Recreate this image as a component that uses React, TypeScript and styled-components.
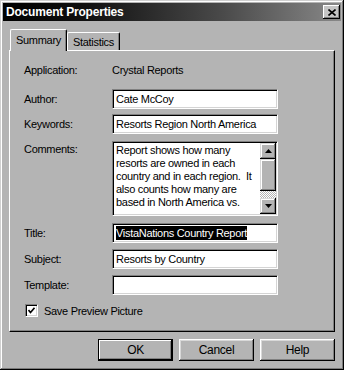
import React from "react";
import styled, { createGlobalStyle } from "styled-components";

const Global = createGlobalStyle`
  html, body { margin: 0; padding: 0; background: #b4b4b4; }
  * { box-sizing: border-box; }
`;

const Window = styled.div`
  width: 344px;
  height: 370px;
  background: #b4b4b4;
  padding: 3px;
  display: flex;
  flex-direction: column;
  font-family: "Liberation Sans", Arial, sans-serif;
  font-size: 11px;
  letter-spacing: -0.3px;
  color: #000;
  box-shadow: inset -1px -1px #000, inset 1px 1px #d0d0d0, inset -2px -2px #7a7a7a,
    inset 2px 2px #fff;
`;

const TitleBar = styled.div`
  height: 18px;
  display: flex;
  align-items: center;
  justify-content: space-between;
  padding: 0 1px 0 3px;
  background: linear-gradient(to right, #000 0%, #111 25%, #4a4a4a 65%, #888 100%);
`;

const TitleText = styled.span`
  color: #fff;
  font-weight: bold;
  font-size: 12px;
  letter-spacing: -0.2px;
`;

const CloseButton = styled.div`
  width: 17px;
  height: 14px;
  background: #c4c4c4;
  display: flex;
  align-items: center;
  justify-content: center;
  box-shadow: inset -1px -1px #000, inset 1px 1px #fff, inset -2px -2px #808080;
`;

const Body = styled.div`
  flex: 1;
  display: flex;
  flex-direction: column;
  padding: 8px 7px 0 6px;
`;

const TabRow = styled.div`
  display: flex;
  align-items: flex-end;
  height: 21px;
  padding-left: 1px;
  position: relative;
  z-index: 1;
`;

const Tab = styled.div<{ $active?: boolean }>`
  height: ${(p) => (p.$active ? 22 : 18)}px;
  width: ${(p) => (p.$active ? 57 : 53)}px;
  margin-bottom: ${(p) => (p.$active ? -1 : 0)}px;
  background: #b4b4b4;
  display: flex;
  align-items: center;
  justify-content: center;
  padding-bottom: ${(p) => (p.$active ? 2 : 0)}px;
  border-top: 1px solid #fff;
  border-left: 1px solid #fff;
  border-right: 1px solid #000;
  border-top-left-radius: 2px;
  border-top-right-radius: 2px;
  box-shadow: inset -1px 0 #808080;
`;

const Panel = styled.div`
  width: 326px;
  height: 282px;
  border-top: 1px solid #fff;
  border-left: 1px solid #fff;
  border-right: 1px solid #000;
  border-bottom: 1px solid #000;
  box-shadow: inset -1px -1px #808080;
  padding: 9px 0 0 14px;
  display: flex;
  flex-direction: column;
`;

const Row = styled.div<{ $gap: number }>`
  display: flex;
  align-items: center;
  margin-top: ${(p) => p.$gap}px;
`;

const TopRow = styled(Row)`
  align-items: flex-start;
`;

const Label = styled.div`
  width: 88px;
  line-height: 13px;
`;

const TopLabel = styled(Label)`
  padding-top: 2px;
`;

const Value = styled.div`
  line-height: 20px;
  height: 20px;
`;

const Field = styled.div<{ $h?: number }>`
  width: 166px;
  height: ${(p) => p.$h ?? 20}px;
  background: #fff;
  border-top: 1px solid #808080;
  border-left: 1px solid #808080;
  border-right: 1px solid #fff;
  border-bottom: 1px solid #fff;
  box-shadow: inset 1px 1px #000, inset -1px -1px #d4d4d4;
  padding: 0 3px;
  line-height: 18px;
  white-space: nowrap;
  overflow: hidden;
`;

const Selected = styled.span`
  background: #000;
  color: #fff;
  display: inline-block;
  line-height: 14px;
`;

const TextArea = styled(Field)`
  display: flex;
  padding: 0 0 0 2px;
  white-space: normal;
`;

const AreaText = styled.div`
  flex: 1;
  padding-top: 2px;
  padding-left: 1px;
  line-height: 13px;
  white-space: nowrap;
`;

const ScrollBar = styled.div`
  width: 16px;
  margin: 1px 1px 1px 0;
  display: flex;
  flex-direction: column;
`;

const ScrollBtn = styled.div<{ $h: number }>`
  height: ${(p) => p.$h}px;
  background: #b4b4b4;
  display: flex;
  align-items: center;
  justify-content: center;
  box-shadow: inset -1px -1px #000, inset 1px 1px #d8d8d8, inset -2px -2px #808080,
    inset 2px 2px #fff;
`;

const Track = styled.div`
  flex: 1;
  background-color: #fff;
  background-image: repeating-conic-gradient(#b4b4b4 0 25%, #fff 0 50%);
  background-size: 2px 2px;
`;

const CheckRow = styled.div`
  display: flex;
  align-items: center;
  margin-top: 9px;
  margin-left: 1px;
  gap: 6px;
`;

const CheckBox = styled.div`
  width: 13px;
  height: 13px;
  background: #fff;
  border-top: 1px solid #808080;
  border-left: 1px solid #808080;
  border-right: 1px solid #fff;
  border-bottom: 1px solid #fff;
  box-shadow: inset 1px 1px #000, inset -1px -1px #d4d4d4;
  display: flex;
  align-items: center;
  justify-content: center;
`;

const ButtonRow = styled.div`
  display: flex;
  justify-content: flex-end;
  gap: 6px;
  margin-top: 7px;
  width: 326px;
`;

const Button = styled.div<{ $default?: boolean }>`
  width: 75px;
  height: 22px;
  display: flex;
  align-items: center;
  justify-content: center;
  font-size: 12px;
  background: #b4b4b4;
  ${(p) =>
    p.$default
      ? "border: 1px solid #000; box-shadow: inset -1px -1px #000, inset 1px 1px #fff, inset -2px -2px #808080;"
      : "box-shadow: inset -1px -1px #000, inset 1px 1px #fff, inset -2px -2px #808080, inset 2px 2px #d8d8d8;"}
`;

const Arrow = ({ up }: { up?: boolean }) => (
  <svg width="7" height="4" viewBox="0 0 7 4">
    {up ? <polygon points="3.5,0 7,4 0,4" fill="#000" /> : <polygon points="0,0 7,0 3.5,4" fill="#000" />}
  </svg>
);

export default function App() {
  return (
    <>
      <Global />
      <Window>
        <TitleBar>
          <TitleText>Document Properties</TitleText>
          <CloseButton>
            <svg width="8" height="7" viewBox="0 0 8 7">
              <path d="M0.5 0.5 L7.5 6.5 M7.5 0.5 L0.5 6.5" stroke="#000" strokeWidth="1.6" />
            </svg>
          </CloseButton>
        </TitleBar>
        <Body>
          <TabRow>
            <Tab $active>Summary</Tab>
            <Tab>Statistics</Tab>
          </TabRow>
          <Panel>
            <Row $gap={0}>
              <Label>Application:</Label>
              <Value>Crystal Reports</Value>
            </Row>
            <Row $gap={9}>
              <Label>Author:</Label>
              <Field>Cate McCoy</Field>
            </Row>
            <Row $gap={5}>
              <Label>Keywords:</Label>
              <Field>Resorts Region North America</Field>
            </Row>
            <TopRow $gap={7}>
              <TopLabel>Comments:</TopLabel>
              <TextArea $h={75}>
                <AreaText>
                  Report shows how many
                  <br />
                  resorts are owned in each
                  <br />
                  country and in each region.&nbsp; It
                  <br />
                  also counts how many are
                  <br />
                  based in North America vs.
                </AreaText>
                <ScrollBar>
                  <ScrollBtn $h={16}>
                    <Arrow up />
                  </ScrollBtn>
                  <ScrollBtn $h={32} />
                  <Track />
                  <ScrollBtn $h={16}>
                    <Arrow />
                  </ScrollBtn>
                </ScrollBar>
              </TextArea>
            </TopRow>
            <Row $gap={7}>
              <Label>Title:</Label>
              <Field>
                <Selected>VistaNations Country Report</Selected>
              </Field>
            </Row>
            <Row $gap={6}>
              <Label>Subject:</Label>
              <Field>Resorts by Country</Field>
            </Row>
            <Row $gap={6}>
              <Label>Template:</Label>
              <Field />
            </Row>
            <CheckRow>
              <CheckBox>
                <svg width="7" height="7" viewBox="0 0 7 7">
                  <path d="M0.5 3 L2.5 5.5 L6.5 0.8" stroke="#000" strokeWidth="1.6" fill="none" />
                </svg>
              </CheckBox>
              <span>Save Preview Picture</span>
            </CheckRow>
          </Panel>
          <ButtonRow>
            <Button $default>OK</Button>
            <Button>Cancel</Button>
            <Button>Help</Button>
          </ButtonRow>
        </Body>
      </Window>
    </>
  );
}
